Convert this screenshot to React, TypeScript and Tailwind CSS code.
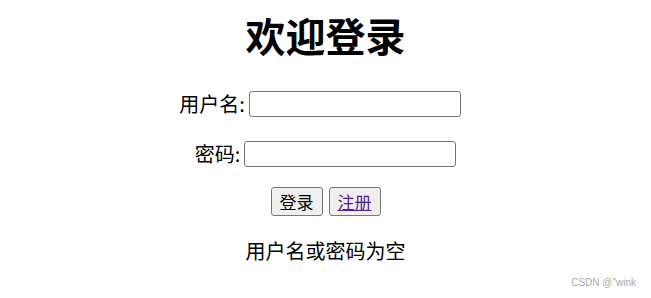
import React from "react";

const cjk = "font-['Microsoft_YaHei','Noto_Sans_CJK_SC',sans-serif]";

export default function App() {
  return (
    <div className={`relative w-[651px] h-[298px] overflow-hidden bg-white text-black ${cjk}`}>
      <div className="flex flex-col items-center">
        {/* heading */}
        <h1 className="mt-[15px] h-[40px] text-[40px] leading-[40px] font-bold">欢迎登录</h1>

        {/* username */}
        <div className="mt-[36px] flex items-center gap-[4px] pr-[11px] text-[20px] leading-[26px]">
          <span>用户名:</span>
          <input type="text" className="h-[26px] w-[212px] rounded-[3px] border border-[#767676] bg-white" />
        </div>

        {/* password */}
        <div className="mt-[24px] flex items-center gap-[4px] text-[20px] leading-[26px]">
          <span>密码:</span>
          <input type="password" className="h-[26px] w-[212px] rounded-[3px] border border-[#767676] bg-white" />
        </div>

        {/* actions */}
        <div className="mt-[20px] flex gap-[6px]">
          <button
            type="button"
            className="flex h-[29px] w-[52px] items-center justify-center rounded-[3px] border border-[#767676] bg-[#efefef] text-[17px]"
          >
            登录
          </button>
          <button
            type="button"
            className="flex h-[29px] w-[52px] items-center justify-center rounded-[3px] border border-[#767676] bg-[#efefef] text-[17px]"
          >
            <a href="#" className="text-[#551a8b] underline">注册</a>
          </button>
        </div>

        {/* message */}
        <p className="mt-[25px] text-[20px] leading-[20px]">用户名或密码为空</p>
      </div>

      <span className="absolute bottom-[9px] right-[15px] font-['Liberation_Sans',sans-serif] text-[10px] leading-[12px] text-[#aaa]">
        CSDN @"wink
      </span>
    </div>
  );
}
